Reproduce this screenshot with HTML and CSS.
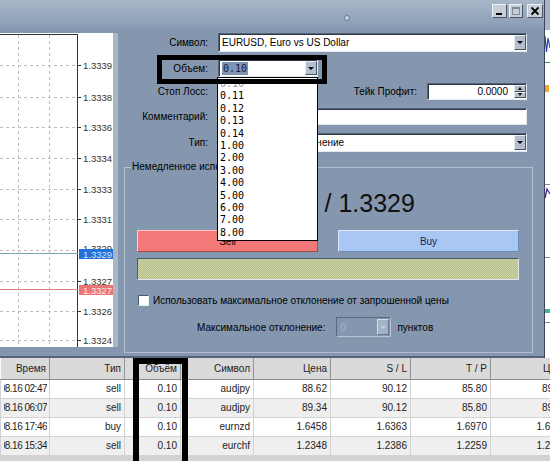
FILE: index.html
```html
<!DOCTYPE html>
<html lang="ru">
<head>
<meta charset="utf-8">
<title>Ордер</title>
<link rel="stylesheet" href="styles.css">
</head>
<body>
<div class="screen">
  <div class="top">
    <div class="dialog">
      <div class="titlebar">
        <span class="grip"></span>
        <div class="tbtns">
          <span class="tb tb-min"><svg width="13" height="12" viewBox="0 0 13 12"><rect x="3" y="8" width="6" height="2" fill="#000"/></svg></span>
          <span class="tb tb-max"><svg width="12" height="12" viewBox="0 0 12 12"><rect x="2.5" y="2.5" width="7" height="7" fill="none" stroke="#7f8a99"/><rect x="2" y="2" width="8" height="2" fill="#7f8a99"/></svg></span>
          <span class="tb tb-close"><svg width="14" height="12" viewBox="0 0 14 12"><path d="M3.5 2.5 L10.5 9.5 M10.5 2.5 L3.5 9.5" stroke="#000" stroke-width="1.8"/></svg></span>
        </div>
      </div>
      <div class="dbody">
        <div class="chart">
          <svg width="113" height="314" viewBox="0 0 113 314">
            <g stroke="#bdbdbd" stroke-dasharray="3,3" stroke-width="1">
              <line x1="18.5" y1="2" x2="18.5" y2="314"/>
              <line x1="49.5" y1="2" x2="49.5" y2="314"/>
              <line x1="0" y1="32.5" x2="77" y2="32.5"/>
              <line x1="0" y1="64.5" x2="77" y2="64.5"/>
              <line x1="0" y1="94.5" x2="77" y2="94.5"/>
              <line x1="0" y1="125.5" x2="77" y2="125.5"/>
              <line x1="0" y1="156.5" x2="77" y2="156.5"/>
              <line x1="0" y1="186.5" x2="77" y2="186.5"/>
              <line x1="0" y1="217.5" x2="77" y2="217.5"/>
              <line x1="0" y1="248.5" x2="77" y2="248.5"/>
              <line x1="0" y1="278.5" x2="77" y2="278.5"/>
              <line x1="0" y1="307.5" x2="77" y2="307.5"/>
            </g>
            <g stroke="#333" stroke-width="1">
              <line x1="0" y1="1.5" x2="77.5" y2="1.5"/>
              <line x1="77.5" y1="1" x2="77.5" y2="314"/>
              <line x1="77" y1="32.5" x2="81" y2="32.5"/>
              <line x1="77" y1="64.5" x2="81" y2="64.5"/>
              <line x1="77" y1="94.5" x2="81" y2="94.5"/>
              <line x1="77" y1="125.5" x2="81" y2="125.5"/>
              <line x1="77" y1="156.5" x2="81" y2="156.5"/>
              <line x1="77" y1="186.5" x2="81" y2="186.5"/>
              <line x1="77" y1="248.5" x2="81" y2="248.5"/>
              <line x1="77" y1="278.5" x2="81" y2="278.5"/>
              <line x1="77" y1="307.5" x2="81" y2="307.5"/>
            </g>
            <g class="axis" fill="#333">
              <text x="83" y="35.5">1.3339</text>
              <text x="83" y="67.5">1.3338</text>
              <text x="83" y="97.5">1.3336</text>
              <text x="83" y="128.5">1.3334</text>
              <text x="83" y="159.5">1.3333</text>
              <text x="83" y="189.5">1.3331</text>
              <text x="83" y="218.5">1.3329</text>
              <text x="83" y="251.5">1.3327</text>
              <text x="83" y="281.5">1.3326</text>
              <text x="83" y="310.5">1.3324</text>
            </g>
            <line x1="0" y1="220.5" x2="78" y2="220.5" stroke="#7aa3b3" stroke-width="1"/>
            <line x1="0" y1="256.5" x2="78" y2="256.5" stroke="#e07d7d" stroke-width="1"/>
            <rect x="79" y="216" width="34" height="10" fill="#2171d6"/>
            <text class="axis" x="83" y="224.5" fill="#d6e6ff">1.3329</text>
            <rect x="79" y="252" width="34" height="10" fill="#e97676"/>
            <text class="axis" x="83" y="260.5" fill="#ffe6e6">1.3327</text>
          </svg>
        </div>
        <div class="form">
          <div class="row r-symbol">
            <label class="lbl">Символ:</label>
            <div class="field combo wide"><span class="val">EURUSD, Euro vs US Dollar</span><span class="arrow"></span></div>
          </div>
          <div class="row r-volume">
            <label class="lbl">Объем:</label>
            <div class="field combo vol">
              <span class="val"><span class="sel">0.10</span></span><span class="arrow"></span>
              <ul class="droplist">
                <li class="first">0.10</li>
                <li>0.11</li>
                <li>0.12</li>
                <li>0.13</li>
                <li>0.14</li>
                <li>1.00</li>
                <li>2.00</li>
                <li>3.00</li>
                <li>4.00</li>
                <li>5.00</li>
                <li>6.00</li>
                <li>7.00</li>
                <li>8.00</li>
              </ul>
            </div>
            <div class="mark mark-volume"></div>
          </div>
          <div class="row r-sl">
            <label class="lbl">Стоп Лосс:</label>
            <div class="field spin sl"><span class="val num">0.0000</span><span class="spinbtn"><i class="up"></i><i class="dn"></i></span></div>
            <label class="lbl2">Тейк Профит:</label>
            <div class="field spin tp"><span class="val num">0.0000</span><span class="spinbtn"><i class="up"></i><i class="dn"></i></span></div>
          </div>
          <div class="row r-comment">
            <label class="lbl">Комментарий:</label>
            <div class="field wide"><span class="val"></span></div>
          </div>
          <div class="row r-type">
            <label class="lbl">Тип:</label>
            <div class="field combo wide"><span class="val">Немедленное исполнение</span><span class="arrow"></span></div>
          </div>
          <fieldset class="group">
            <legend>Немедленное исполнение</legend>
            <div class="gin">
              <div class="price">1.3327 / 1.3329</div>
              <div class="trade">
                <div class="tbtn sell">Sell</div>
                <div class="tbtn buy">Buy</div>
              </div>
              <div class="bar"></div>
              <div class="chk-row">
                <span class="chk"></span>
                <span>Использовать максимальное отклонение от запрошенной цены</span>
              </div>
              <div class="dev-row">
                <span class="dev-lbl">Максимальное отклонение:</span>
                <div class="dspin"><span class="dval">0</span><span class="darrow"></span></div>
                <span class="units">пунктов</span>
              </div>
            </div>
          </fieldset>
        </div>
      </div>
    </div>
    <div class="strip">
      <svg width="5" height="358" viewBox="0 0 5 358">
        <rect x="0" y="0" width="5" height="30" fill="#a6b5c7"/>
        <polyline points="0,36 1.5,52 3,38 5,48" fill="none" stroke="#2a3fb8" stroke-width="1.2"/>
        <line x1="0" y1="62.5" x2="5" y2="62.5" stroke="#3c8c44"/>
        <rect x="0" y="85" width="4" height="7" fill="#f0a43a"/>
        <line x1="0" y1="184.5" x2="5" y2="184.5" stroke="#8a8a8a"/>
        <polyline points="0,198 2,189 5,194" fill="none" stroke="#4b2aa0" stroke-width="1.4"/>
        <line x1="0" y1="257.5" x2="5" y2="257.5" stroke="#8a8a8a"/>
        <rect x="0" y="309" width="5" height="4" fill="#45b4a4"/>
        <line x1="0" y1="322.5" x2="5" y2="322.5" stroke="#8a8a8a"/>
      </svg>
    </div>
  </div>
  <div class="orders">
    <table class="grid">
      <colgroup>
        <col class="w49"><col class="w75"><col class="w56"><col class="w73"><col class="w77"><col class="w80"><col class="w80"><col class="w80">
      </colgroup>
      <thead>
        <tr><th>Время</th><th>Тип</th><th>Объём</th><th>Символ</th><th>Цена</th><th>S / L</th><th>T / P</th><th>Цена</th></tr>
      </thead>
      <tbody>
        <tr><td><div class="clip">2011.08.16 02:47</div></td><td>sell</td><td>0.10</td><td>audjpy</td><td>88.62</td><td>90.12</td><td>85.80</td><td>89.64</td></tr>
        <tr><td><div class="clip">2011.08.16 06:07</div></td><td>sell</td><td>0.10</td><td>audjpy</td><td>89.34</td><td>90.12</td><td>85.80</td><td>89.64</td></tr>
        <tr><td><div class="clip">2011.08.16 17:46</div></td><td>buy</td><td>0.10</td><td>eurnzd</td><td>1.6458</td><td>1.6363</td><td>1.6970</td><td>1.6397</td></tr>
        <tr><td><div class="clip">2011.08.16 15:34</div></td><td>sell</td><td>0.10</td><td>eurchf</td><td>1.2348</td><td>1.2386</td><td>1.2259</td><td>1.2312</td></tr>
      </tbody>
    </table>
    <div class="mark mark-col"></div>
  </div>
</div>
</body>
</html>
```

FILE: styles.css
```css
* { box-sizing: border-box; }
html, body { margin: 0; padding: 0; }
body {
  width: 550px;
  height: 461px;
  overflow: hidden;
  background: #d2d2d2;
  font-family: "Liberation Sans", Arial, sans-serif;
  font-size: 10px;
  color: #000;
}
.screen { width: 550px; height: 461px; overflow: hidden; position: relative; }

/* ---------- top: dialog + side strip ---------- */
.top { display: flex; height: 358px; }
.dialog {
  width: 544px;
  height: 358px;
  background: #8497af;
  border-bottom: 2px solid #56657b;
  display: flex;
  flex-direction: column;
}
.titlebar {
  height: 28px;
  flex: none;
  background: linear-gradient(#a7b6c8, #8a9db5);
  display: flex;
  align-items: flex-start;
  padding: 4px 1px 0 0;
}
.grip {
  width: 6px; height: 6px;
  border: 1px solid #66778e;
  border-radius: 50%;
  background: #c9d3df;
  margin: 11px 0 0 344px;
}
.tbtns { margin-left: auto; display: flex; gap: 2px; }
.tb {
  display: block;
  height: 14px;
  background: #c6ced9;
  border: 1px solid;
  border-color: #eef2f6 #4a5565 #4a5565 #eef2f6;
}
.tb svg { display: block; }
.tb-min { width: 15px; }
.tb-max { width: 14px; }
.tb-close { width: 16px; margin-left: 2px; }

.dbody { flex: 1; display: flex; min-height: 0; }

/* ---------- tick chart ---------- */
.chart {
  flex: none;
  width: 118px;
  height: 314px;
  margin-top: 5px;
  background: #fff;
  border-right: 5px solid #a9b6c5;
}
.chart svg { display: block; }
.axis { font-family: "Liberation Sans", Arial, sans-serif; font-size: 9.5px; }

/* ---------- form ---------- */
.form { flex: 1; display: flex; flex-direction: column; padding-top: 5px; min-width: 0; }
.row { display: flex; align-items: center; position: relative; margin-right: 17px; }
.lbl { flex: none; width: 90px; margin-right: 10px; text-align: right; white-space: nowrap; }
.lbl2 { flex: 1; margin-right: 10px; text-align: right; white-space: nowrap; }

.field {
  position: relative;
  display: flex;
  align-items: stretch;
  height: 100%;
  background: #fff;
  border: 1px solid;
  border-color: #56647a #e3e9f0 #e3e9f0 #56647a;
  box-shadow: inset 1px 1px 0 #2e3746;
}
.wide { width: 309px; }
.val {
  flex: 1;
  display: flex;
  align-items: center;
  padding-left: 3px;
  white-space: nowrap;
  overflow: hidden;
}
.num { justify-content: flex-end; padding-right: 6px; }
.arrow {
  flex: none;
  width: 12px;
  margin: 1px 0;
  background: #b3bfcc;
  border: 1px solid;
  border-color: #e9eef3 #4b5668 #4b5668 #e9eef3;
  display: flex;
  align-items: center;
  justify-content: center;
}
.arrow::after {
  content: "";
  border-left: 3px solid transparent;
  border-right: 3px solid transparent;
  border-top: 3px solid #000;
}

.r-symbol { height: 19px; }
.r-volume { height: 18px; margin-top: 7px; }
.r-sl { height: 17px; margin-top: 6px; }
.r-comment { height: 17px; margin-top: 8px; }
.r-type { height: 19px; margin-top: 8px; }

.vol { width: 100px; }
.sel {
  display: inline-block;
  background: #8193b1;
  color: #0d1c42;
  font-family: "DejaVu Sans Mono", monospace;
  font-size: 10px;
  line-height: 13px;
  padding: 0 1px;
}
.sl, .tp { width: 100px; }
.spinbtn { flex: none; width: 12px; display: flex; flex-direction: column; margin: 1px 0; }
.spinbtn i {
  flex: 1;
  display: flex;
  align-items: center;
  justify-content: center;
  background: #b3bfcc;
  border: 1px solid;
  border-color: #e9eef3 #4b5668 #4b5668 #e9eef3;
}
.spinbtn .up::after {
  content: "";
  border-left: 2.5px solid transparent;
  border-right: 2.5px solid transparent;
  border-bottom: 3px solid #000;
}
.spinbtn .dn::after {
  content: "";
  border-left: 2.5px solid transparent;
  border-right: 2.5px solid transparent;
  border-top: 3px solid #000;
}

/* dropdown list of volumes */
.droplist {
  position: absolute;
  left: -2px;
  top: 17px;
  width: 101px;
  height: 164px;
  margin: 0;
  padding: 0;
  list-style: none;
  background: #fff;
  border: 1px solid #000;
  overflow: hidden;
  z-index: 5;
  font-family: "DejaVu Sans Mono", monospace;
  font-size: 10px;
}
.droplist li { height: 12.4px; line-height: 12.4px; padding-left: 2px; }
.droplist .first { color: #8e98aa; }

/* highlight frames */
.mark { position: absolute; border: 5px solid #000; z-index: 6; pointer-events: none; }
.mark-volume { left: 39px; top: -4px; width: 170px; height: 29px; }
.mark-col { left: 133px; top: 0; width: 55px; height: 120px; border-width: 6px; }

/* ---------- group box ---------- */
.group {
  margin: 9px 11px 0 6px;
  padding: 0;
  height: 192px;
  min-width: 0;
  border: 1px solid #b1bfcf;
}
.group legend { margin-left: 6px; padding: 0 1px; line-height: 12px; font-size: 10px; }
.gin { padding: 16px 13px 0 12px; }
.price {
  height: 28px;
  line-height: 28px;
  font-size: 25px;
  text-align: center;
  color: #111;
  white-space: nowrap;
}
.trade { display: flex; gap: 20px; margin-top: 13px; }
.tbtn {
  flex: 1;
  height: 22px;
  display: flex;
  align-items: center;
  justify-content: center;
  border: 1px solid;
}
.sell { background: #f37878; border-color: #ffc8c8 #a44c4c #a44c4c #ffc8c8; }
.buy { background: #a9c7f4; border-color: #dbe9ff #6d8ab6 #6d8ab6 #dbe9ff; color: #152650; }
.bar {
  margin-top: 6px;
  height: 22px;
  background: repeating-conic-gradient(#cbd1a2 0 25%, #b7bf8d 0 50%) 0 0 / 2px 2px;
  border: 1px solid;
  border-color: #4b596b #dfe6ee #dfe6ee #4b596b;
}
.chk-row { display: flex; align-items: center; height: 13px; margin-top: 14px; white-space: nowrap; }
.chk {
  flex: none;
  width: 11px;
  height: 11px;
  margin: 0 4px 0 1px;
  background: #fff;
  border: 1px solid;
  border-color: #4b596b #e8eef4 #e8eef4 #4b596b;
}
.dev-row { display: flex; align-items: center; height: 20px; margin-top: 10px; padding-left: 60px; white-space: nowrap; }
.dev-lbl { margin-right: 11px; }
.dspin {
  display: flex;
  width: 55px;
  height: 20px;
  border: 1px solid;
  border-color: #5a697f #b7c5d3 #b7c5d3 #5a697f;
}
.dval { flex: 1; display: flex; align-items: center; padding-left: 3px; color: #a9b7c7; }
.darrow {
  width: 12px;
  margin: 1px;
  background: #a3b3c6;
  border: 1px solid;
  border-color: #d4dde7 #66768c #66768c #d4dde7;
  display: flex;
  align-items: center;
  justify-content: center;
}
.darrow::after {
  content: "";
  border-left: 3px solid transparent;
  border-right: 3px solid transparent;
  border-top: 3px solid #c5cfda;
}
.units { margin-left: 6px; }

/* ---------- side strip ---------- */
.strip { flex: none; width: 6px; height: 358px; background: #fff; border-left: 1px solid #3b4759; }
.strip svg { display: block; }

/* ---------- orders table ---------- */
.orders { position: relative; height: 103px; overflow: hidden; background: #d2d2d2; }
.grid { border-collapse: collapse; table-layout: fixed; width: 570px; }
.w49 { width: 49px; } .w75 { width: 75px; } .w56 { width: 56px; } .w73 { width: 73px; }
.w77 { width: 77px; } .w80 { width: 80px; }
.grid th {
  height: 21px;
  padding: 0 3px;
  background: #dadada;
  font-weight: normal;
  text-align: right;
  color: #222;
  border-left: 1px solid #fbfbfb;
  border-right: 1px solid #959595;
  border-bottom: 1px solid #8c8c8c;
  white-space: nowrap;
  overflow: hidden;
}
.grid td {
  height: 19px;
  padding: 0 3px;
  text-align: right;
  color: #222;
  background: #fff;
  border-right: 1px solid #d3d3d3;
  border-bottom: 1px solid #d3d3d3;
  white-space: nowrap;
  overflow: hidden;
}
.grid tbody tr:nth-child(even) td { background: #efefef; }
.grid td:first-child { padding-right: 2px; }
.clip { display: flex; justify-content: flex-end; overflow: hidden; white-space: nowrap; letter-spacing: -0.5px; }
```
